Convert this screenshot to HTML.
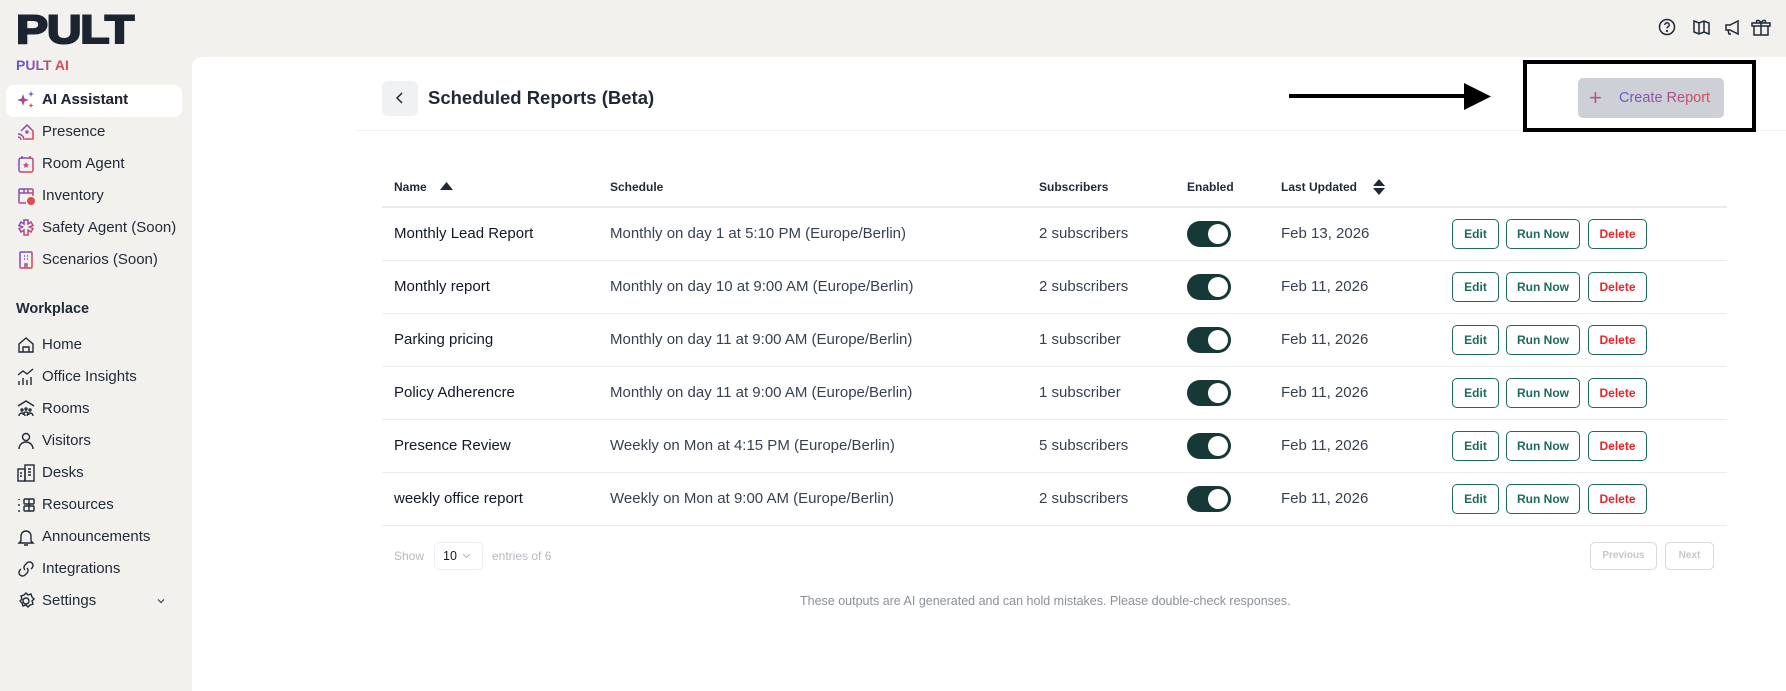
<!DOCTYPE html>
<html><head><meta charset="utf-8"><style>
*{margin:0;padding:0;box-sizing:border-box}
body{width:1786px;height:691px;background:#f2f1ee;font-family:"Liberation Sans",sans-serif;color:#1f2937;position:relative;overflow:hidden}
.a{position:absolute;white-space:nowrap}
.logo{left:16px;top:8px;font-size:40px;font-weight:900;letter-spacing:-1px;color:#1c2331;transform:scaleX(1.2);transform-origin:left;-webkit-text-stroke:2px #1c2331}
.grad{background:linear-gradient(90deg,#5b5bd6,#e5484d);-webkit-background-clip:text;background-clip:text;color:transparent}
.nav{left:42px;font-size:15px;color:#1f2937}
.ic{position:absolute;left:16px;width:20px;height:20px}
.main{left:192px;top:57px;width:1594px;height:634px;background:#fff;border-top-left-radius:10px}
.th{font-size:12px;font-weight:bold;color:#1f2937;top:180px}
.td{font-size:15px;color:#374151}
.line{position:absolute;left:382px;width:1345px;height:1px;background:#ebebeb}
.btn{position:absolute;height:30px;border:1px solid #1d6b5e;border-radius:5px;font-size:12px;font-weight:bold;color:#1d6b5e;text-align:center;line-height:28px}
.tog{position:absolute;left:1187px;width:44px;height:26px;border-radius:13px;background:#163836}
.tog:after{content:"";position:absolute;right:3px;top:3px;width:20px;height:20px;border-radius:50%;background:#fff}
</style></head><body>
<div class="a logo">PULT</div>
<div class="a grad" style="left:16px;top:57px;font-size:14px;font-weight:bold">PULT AI</div>
<div class="a" style="left:6px;top:85px;width:176px;height:32px;background:#fff;border-radius:8px"></div>
<svg class="ic" style="top:90px" viewBox="0 0 20 20"><defs><linearGradient id="g" x1="0" y1="0" x2="1" y2="1"><stop offset="0" stop-color="#6a4bd6"/><stop offset="1" stop-color="#e5484d"/></linearGradient></defs><path d="M7 4l1.5 4.5L13 10l-4.5 1.5L7 16l-1.5-4.5L1 10l4.5-1.5z" fill="url(#g)"/><path d="M15 1l.8 2.2L18 4l-2.2.8L15 7l-.8-2.2L12 4l2.2-.8z" fill="#6a5bd6"/><path d="M15 13l.7 1.8 1.8.7-1.8.7L15 18l-.7-1.8-1.8-.7 1.8-.7z" fill="#e5484d"/></svg>
<div class="a nav grad" style="top:91px;font-weight:bold">AI Assistant</div>
<svg class="ic" style="top:122px" viewBox="0 0 20 20" fill="none" stroke="url(#g)" stroke-width="1.5"><path d="M5 9l6-6 6 6v8H9"/><circle cx="11" cy="10" r="1"/><path d="M2 12a6 6 0 016 6M2 15a3 3 0 013 3"/></svg>
<div class="a nav" style="top:123px">Presence</div>
<svg class="ic" style="top:154px" viewBox="0 0 20 20" fill="none" stroke="url(#g)" stroke-width="1.5"><rect x="3" y="4" width="14" height="14" rx="2"/><path d="M6 2v3M14 2v3"/><path d="M10 8l1 2 2 .3-1.5 1.4.4 2.1L10 13l-1.9.8.4-2.1L7 10.3l2-.3z" fill="#c44e8a" stroke="none"/></svg>
<div class="a nav" style="top:155px">Room Agent</div>
<svg class="ic" style="top:186px" viewBox="0 0 20 20" fill="none" stroke="url(#g)" stroke-width="1.5"><path d="M10 17H4a1 1 0 01-1-1V4a1 1 0 011-1h12a1 1 0 011 1v6M3 7h14M8 3v4M12 3v4"/><circle cx="15" cy="15" r="4" fill="#e5484d" stroke="none"/></svg>
<div class="a nav" style="top:187px">Inventory</div>
<svg class="ic" style="top:218px" viewBox="0 0 20 20" fill="none" stroke="url(#g)" stroke-width="1.5"><path d="M8 2h4v4l3-2 2 3.5-3.5 1.5 3.5 1.5L15 14l-3-2v5H8v-5l-3 2-2-3.5L6.5 9 3 7.5 5 4l3 2z"/></svg>
<div class="a nav" style="top:219px">Safety Agent (Soon)</div>
<svg class="ic" style="top:250px" viewBox="0 0 20 20" fill="none" stroke="url(#g)" stroke-width="1.5"><rect x="4" y="2" width="12" height="16" rx="1"/><path d="M8 6h1M11 6h1M8 9h1M11 9h1M9 18v-4h2v4"/></svg>
<div class="a nav" style="top:251px">Scenarios (Soon)</div>
<div class="a" style="left:16px;top:301px;font-size:14.5px;font-weight:bold">Workplace</div>
<svg class="ic" style="top:335px" viewBox="0 0 20 20" fill="none" stroke="#1f2937" stroke-width="1.4"><path d="M3 9l7-6 7 6v8H3z"/><path d="M7 17v-5h6v5"/></svg>
<div class="a nav" style="top:336px">Home</div>
<svg class="ic" style="top:367px" viewBox="0 0 20 20" fill="none" stroke="#1f2937" stroke-width="1.4"><path d="M3 18v-4M7 18v-7M11 18v-5M15 18v-8M2 8l5-4 4 3 6-5"/></svg>
<div class="a nav" style="top:368px">Office Insights</div>
<svg class="ic" style="top:399px" viewBox="0 0 20 20" fill="none" stroke="#1f2937" stroke-width="1.4"><path d="M2 7l8-5 8 5"/><circle cx="6" cy="11" r="1"/><circle cx="10" cy="10" r="1"/><circle cx="14" cy="11" r="1"/><path d="M3 17a3 3 0 016 0M7 16a3 3 0 016 0M11 17a3 3 0 016 0"/></svg>
<div class="a nav" style="top:400px">Rooms</div>
<svg class="ic" style="top:431px" viewBox="0 0 20 20" fill="none" stroke="#1f2937" stroke-width="1.4"><circle cx="10" cy="6" r="3.5"/><path d="M3 18a7 7 0 0114 0"/></svg>
<div class="a nav" style="top:432px">Visitors</div>
<svg class="ic" style="top:463px" viewBox="0 0 20 20" fill="none" stroke="#1f2937" stroke-width="1.4"><rect x="2" y="6" width="7" height="12"/><rect x="9" y="2" width="9" height="16"/><path d="M12 6h3M12 9h3M12 12h3M4 10h2M4 13h2"/></svg>
<div class="a nav" style="top:464px">Desks</div>
<svg class="ic" style="top:495px" viewBox="0 0 20 20" fill="none" stroke="#1f2937" stroke-width="1.4"><path d="M3 4v1M3 9v2M3 15v2"/><rect x="8" y="4" width="10" height="5" rx="1"/><rect x="8" y="11" width="10" height="5" rx="1"/><path d="M13 4v12"/></svg>
<div class="a nav" style="top:496px">Resources</div>
<svg class="ic" style="top:527px" viewBox="0 0 20 20" fill="none" stroke="#1f2937" stroke-width="1.4"><path d="M5 14V9a5 5 0 0110 0v5l2 2H3zM8 18h4"/></svg>
<div class="a nav" style="top:528px">Announcements</div>
<svg class="ic" style="top:559px" viewBox="0 0 20 20" fill="none" stroke="#1f2937" stroke-width="1.4"><path d="M9 11a3.5 3.5 0 010-5l2-2a3.5 3.5 0 015 5l-1 1M11 9a3.5 3.5 0 010 5l-2 2a3.5 3.5 0 01-5-5l1-1"/></svg>
<div class="a nav" style="top:560px">Integrations</div>
<svg class="ic" style="top:591px" viewBox="0 0 20 20" fill="none" stroke="#1f2937" stroke-width="1.4"><circle cx="10" cy="10" r="3"/><path d="M10 2l2 2 3-1 1 3 2 2-2 2 1 3-3 1-2 2-2-2-3 1-1-3-2-2 2-2-1-3 3-1z"/></svg>
<div class="a nav" style="top:592px">Settings</div>
<svg class="a" style="left:156px;top:596px" width="10" height="10" viewBox="0 0 10 10" fill="none" stroke="#374151" stroke-width="1.2"><path d="M2 3.5l3 3 3-3"/></svg>

<svg class="a" style="left:1656px;top:16px" width="124" height="22" viewBox="0 0 124 22" fill="none" stroke="#1f2937" stroke-width="1.5"><circle cx="11" cy="11" r="7.5"/><path d="M8.8 9a2.2 2.2 0 114 1.2c-.8.6-1.8 1-1.8 2.2"/><circle cx="11" cy="15" r=".4" fill="#1f2937"/><path d="M38 5l5 2 5-2 5 2v11l-5-2-5 2-5-2zM43 7v11M48 5v11"/><path d="M70 9h4l8-4v13l-8-4h-4zM72 14l1 4h2"/><path d="M98 10h14v9H98zM96 7h18v3H96zM105 7v12M105 7c-2-4-6-3-4 0M105 7c2-4 6-3 4 0"/></svg>

<div class="a main"></div>
<div class="a" style="left:382px;top:81px;width:36px;height:35px;background:#f0f1f3;border-radius:6px"></div>
<svg class="a" style="left:393px;top:91px" width="14" height="14" viewBox="0 0 14 14" fill="none" stroke="#1f2937" stroke-width="1.5"><path d="M9 2L4 7l5 5"/></svg>
<div class="a" style="left:428px;top:87px;font-size:18.5px;font-weight:bold;color:#1f2937">Scheduled Reports (Beta)</div>
<div class="a" style="left:355px;top:130px;width:1431px;height:1px;background:#f2f2f2"></div>
<div class="a" style="left:1289px;top:94px;width:180px;height:4px;background:#000"></div>
<svg class="a" style="left:1464px;top:83px" width="28" height="27"><path d="M0 0L27 13.5 0 27z" fill="#000"/></svg>
<div class="a" style="left:1523px;top:60px;width:233px;height:72px;border:4px solid #000"></div>
<div class="a" style="left:1578px;top:78px;width:146px;height:40px;background:#cdd0d7;border-radius:5px"></div>
<div class="a" style="left:1589px;top:85px;font-size:22px;color:#c0508a">+</div>
<div class="a grad" style="left:1619px;top:90px;font-size:14.5px">Create Report</div>

<div class="a th" style="left:394px">Name</div>
<svg class="a" style="left:440px;top:182px" width="13" height="8"><path d="M0 8L6.5 0 13 8z" fill="#1f2937"/></svg>
<div class="a th" style="left:610px">Schedule</div>
<div class="a th" style="left:1039px">Subscribers</div>
<div class="a th" style="left:1187px">Enabled</div>
<div class="a th" style="left:1281px">Last Updated</div>
<svg class="a" style="left:1373px;top:179px" width="12" height="16"><path d="M0 7L6 0 12 7zM0 9l6 7 6-7z" fill="#1f2937"/></svg>
<div class="line" style="top:206px;height:2px"></div>
<div class="line" style="top:260px"></div><div class="line" style="top:313px"></div><div class="line" style="top:366px"></div><div class="line" style="top:419px"></div><div class="line" style="top:472px"></div><div class="line" style="top:525px"></div>

<div class="a td" style="left:394px;top:225px;color:#111827">Monthly Lead Report</div><div class="a td" style="left:610px;top:225px">Monthly on day 1 at 5:10 PM (Europe/Berlin)</div><div class="a td" style="left:1039px;top:225px">2 subscribers</div><div class="tog" style="top:221px"></div><div class="a td" style="left:1281px;top:225px">Feb 13, 2026</div>
<div class="a td" style="left:394px;top:278px;color:#111827">Monthly report</div><div class="a td" style="left:610px;top:278px">Monthly on day 10 at 9:00 AM (Europe/Berlin)</div><div class="a td" style="left:1039px;top:278px">2 subscribers</div><div class="tog" style="top:274px"></div><div class="a td" style="left:1281px;top:278px">Feb 11, 2026</div>
<div class="a td" style="left:394px;top:331px;color:#111827">Parking pricing</div><div class="a td" style="left:610px;top:331px">Monthly on day 11 at 9:00 AM (Europe/Berlin)</div><div class="a td" style="left:1039px;top:331px">1 subscriber</div><div class="tog" style="top:327px"></div><div class="a td" style="left:1281px;top:331px">Feb 11, 2026</div>
<div class="a td" style="left:394px;top:384px;color:#111827">Policy Adherencre</div><div class="a td" style="left:610px;top:384px">Monthly on day 11 at 9:00 AM (Europe/Berlin)</div><div class="a td" style="left:1039px;top:384px">1 subscriber</div><div class="tog" style="top:380px"></div><div class="a td" style="left:1281px;top:384px">Feb 11, 2026</div>
<div class="a td" style="left:394px;top:437px;color:#111827">Presence Review</div><div class="a td" style="left:610px;top:437px">Weekly on Mon at 4:15 PM (Europe/Berlin)</div><div class="a td" style="left:1039px;top:437px">5 subscribers</div><div class="tog" style="top:433px"></div><div class="a td" style="left:1281px;top:437px">Feb 11, 2026</div>
<div class="a td" style="left:394px;top:490px;color:#111827">weekly office report</div><div class="a td" style="left:610px;top:490px">Weekly on Mon at 9:00 AM (Europe/Berlin)</div><div class="a td" style="left:1039px;top:490px">2 subscribers</div><div class="tog" style="top:486px"></div><div class="a td" style="left:1281px;top:490px">Feb 11, 2026</div>

<div class="btn" style="left:1452px;top:219px;width:47px">Edit</div><div class="btn" style="left:1506px;top:219px;width:74px">Run Now</div><div class="btn" style="left:1588px;top:219px;width:59px;color:#e5252a">Delete</div>
<div class="btn" style="left:1452px;top:272px;width:47px">Edit</div><div class="btn" style="left:1506px;top:272px;width:74px">Run Now</div><div class="btn" style="left:1588px;top:272px;width:59px;color:#e5252a">Delete</div>
<div class="btn" style="left:1452px;top:325px;width:47px">Edit</div><div class="btn" style="left:1506px;top:325px;width:74px">Run Now</div><div class="btn" style="left:1588px;top:325px;width:59px;color:#e5252a">Delete</div>
<div class="btn" style="left:1452px;top:378px;width:47px">Edit</div><div class="btn" style="left:1506px;top:378px;width:74px">Run Now</div><div class="btn" style="left:1588px;top:378px;width:59px;color:#e5252a">Delete</div>
<div class="btn" style="left:1452px;top:431px;width:47px">Edit</div><div class="btn" style="left:1506px;top:431px;width:74px">Run Now</div><div class="btn" style="left:1588px;top:431px;width:59px;color:#e5252a">Delete</div>
<div class="btn" style="left:1452px;top:484px;width:47px">Edit</div><div class="btn" style="left:1506px;top:484px;width:74px">Run Now</div><div class="btn" style="left:1588px;top:484px;width:59px;color:#e5252a">Delete</div>

<div class="a" style="left:394px;top:549px;font-size:12px;color:#b5b8bf">Show</div>
<div class="a" style="left:434px;top:542px;width:49px;height:28px;border:1px solid #eceef1;border-radius:5px"></div>
<div class="a" style="left:443px;top:549px;font-size:12.5px;color:#111827">10</div>
<svg class="a" style="left:462px;top:552px" width="9" height="8" fill="none" stroke="#b5b8bf" stroke-width="1"><path d="M1 2l3.5 3.5L8 2"/></svg>
<div class="a" style="left:492px;top:549px;font-size:12px;color:#b5b8bf">entries of 6</div>
<div class="a" style="left:1590px;top:542px;width:67px;height:28px;border:1px solid #d6d9de;border-radius:5px;font-size:10px;font-weight:bold;color:#c3c6cc;text-align:center;line-height:26px">Previous</div>
<div class="a" style="left:1665px;top:542px;width:49px;height:28px;border:1px solid #d6d9de;border-radius:5px;font-size:10px;font-weight:bold;color:#c3c6cc;text-align:center;line-height:26px">Next</div>
<div class="a" style="left:800px;top:594px;font-size:12.5px;color:#8a8f98">These outputs are AI generated and can hold mistakes. Please double-check responses.</div>
</body></html>
